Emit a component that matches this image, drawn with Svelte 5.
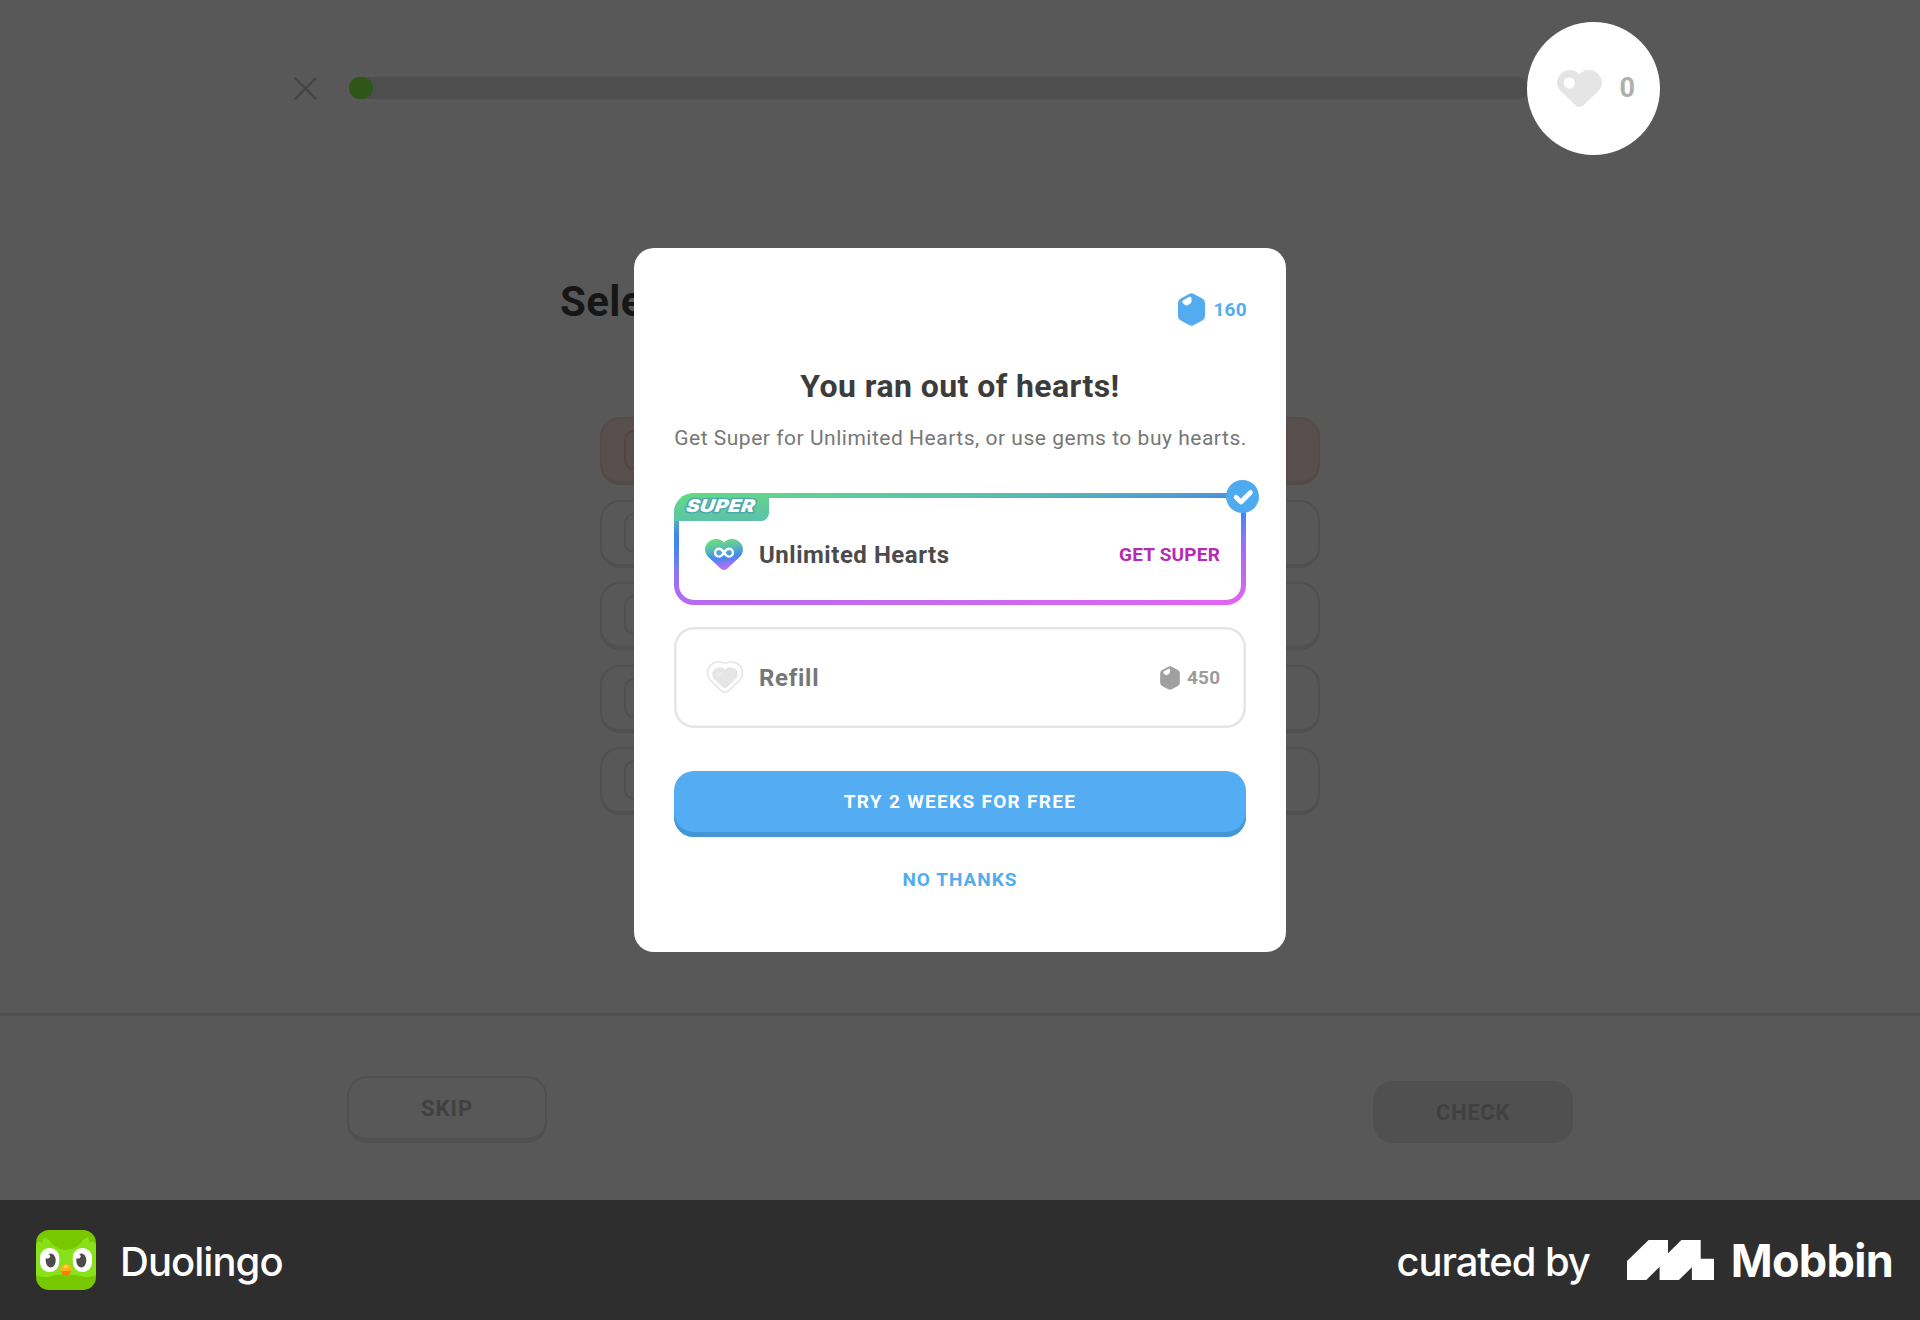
<script>
  const options = [
    { id: 1, wrong: true },
    { id: 2, wrong: false },
    { id: 3, wrong: false },
    { id: 4, wrong: false },
    { id: 5, wrong: false }
  ];
</script>

{#snippet gem(cls)}
  <svg class={cls} viewBox="0 0 27 33" aria-hidden="true">
    <path fill="currentColor" d="M11.1.9a5 5 0 0 1 4.8 0l8.4 4.6A5 5 0 0 1 27 9.9v13.2a5 5 0 0 1-2.7 4.4l-8.4 4.6a5 5 0 0 1-4.8 0l-8.4-4.6A5 5 0 0 1 0 23.1V9.9a5 5 0 0 1 2.7-4.4z" />
    <path fill="#fff" d="M10.8 4.1 5.4 7.3C3.8 8.3 3.9 9.5 5 10.3l2.1 1.6c1 .8 2 .7 3 .1l2.2-1.5c.9-.6 1.2-1.3 1.2-2.4V5.3c0-1.500-1.300-2-2.700-1.200z" />
  </svg>
{/snippet}

<div class="page">
  <main class="lesson">
    <header class="top">
      <svg class="close" viewBox="0 0 24 24" aria-hidden="true">
        <path d="M1.500 1.500l21 21M22.500 1.500l-21 21" />
      </svg>
      <div class="track"><div class="fill"></div></div>
      <div class="spotlight">
        <svg class="heart" viewBox="0 0 45 37" aria-hidden="true">
          <path fill="#e5e5e5" d="M22.500 4.200C17.800-1.300 9.500-1.300 4.200 3.500-1.200 8.600-1.300 15.800 3.300 20.800l15.200 14.500c2.600 2.300 5.400 2.300 8 0l15.200-14.500C46.300 15.800 46.200 8.600 40.800 3.500 35.500-1.300 27.200-1.300 22.500 4.200z" />
          <circle cx="12.300" cy="13" r="5.500" fill="#fff" />
        </svg>
        <span class="lives">0</span>
      </div>
    </header>

    <section class="challenge">
      <h1>Select</h1>
      <ul>
        {#each options as option (option.id)}
          <li class:wrong={option.wrong}><span class="key"></span></li>
        {/each}
      </ul>
    </section>

    <footer class="actions">
      <button class="skip">SKIP</button>
      <button class="check">CHECK</button>
    </footer>

    <div class="modal">
      <div class="balance">
        {@render gem('gem')}
        <span class="amount">160</span>
      </div>
      <h2>You ran out of hearts!</h2>
      <p class="sub">Get Super for Unlimited Hearts, or use gems to buy hearts.</p>

      <div class="card super">
        <div class="tag"><span>SUPER</span></div>
        <svg class="tick" viewBox="0 0 33 33" aria-hidden="true">
          <circle cx="16.500" cy="16.500" r="16.500" fill="#4eabf0" />
          <path d="M10 17.300l5 4.700L24.500 12.500" fill="none" stroke="#fff" stroke-width="4.600" stroke-linecap="round" stroke-linejoin="round" />
        </svg>
        <div class="inner">
          <svg class="card-icon" viewBox="0 0 38 31" aria-hidden="true">
            <defs>
              <linearGradient id="super-heart" x1=".3" y1="0" x2=".5" y2="1">
                <stop offset="0" stop-color="#6be07a" />
                <stop offset=".3" stop-color="#5cbfae" />
                <stop offset=".62" stop-color="#4488f0" />
                <stop offset=".84" stop-color="#9a74f4" />
                <stop offset="1" stop-color="#d266f4" />
              </linearGradient>
            </defs>
            <path fill="url(#super-heart)" d="M19 3.500C15-1.100 8-1.100 3.500 3-1 7.200-1 13.200 2.800 17.400l12.800 12.200c2.200 1.900 4.600 1.900 6.800 0L35.200 17.400C39 13.200 39 7.200 34.500 3 30-1.100 23-1.100 19 3.500z" />
            <path d="M19 13.700c-1.700-2.600-3.200-3.900-5-3.900a3.900 3.900 0 0 0 0 7.800c1.800 0 3.300-1.300 5-3.900 1.700-2.600 3.200-3.900 5-3.900a3.900 3.900 0 0 1 0 7.800c-1.800 0-3.300-1.300-5-3.900z" fill="none" stroke="#fff" stroke-width="2.400" stroke-linejoin="round" />
          </svg>
          <span class="name">Unlimited Hearts</span>
          <span class="get">GET SUPER</span>
        </div>
      </div>

      <div class="card refill">
        <div class="inner">
          <svg class="card-icon" viewBox="0 0 38 33" aria-hidden="true">
            <path fill="#fff" stroke="#e5e5e5" stroke-width="1.500" d="M20 2.200C17.500 1.200 15.500.9 13.200.9 10.300.9 8 1.900 5.900 3.900 1.500 8.300 1.600 15.300 5.600 19.500l10.200 9.900c2.600 2.400 5.800 2.400 8.400 0l10.200-9.900c4-4.200 4.100-11.200-.3-15.600-2.100-2-4.400-3-7.300-3-2.300 0-4.300.3-6.800 1.300z" />
            <path fill="#e5e5e5" d="M20 8.600c-2.700-3.200-7.300-3.200-10.300-.5-3.100 2.900-3.100 7-.5 9.800l8.700 8.400c1.400 1.200 2.800 1.200 4.200 0l8.700-8.400c2.600-2.800 2.600-6.900-.5-9.800-3-2.700-7.600-2.700-10.300.5z" />
            <circle cx="13.500" cy="13" r="2.800" fill="#ebebeb" />
          </svg>
          <span class="name">Refill</span>
          {@render gem('gem-small')}
          <span class="cost">450</span>
        </div>
      </div>

      <button class="try">TRY 2 WEEKS FOR FREE</button>
      <button class="no">NO THANKS</button>
    </div>
  </main>

  <div class="credits">
    <svg class="owl" viewBox="0 0 60 60" aria-hidden="true">
      <defs><clipPath id="owl-tile"><rect width="60" height="60" rx="13" /></clipPath></defs>
      <g clip-path="url(#owl-tile)">
        <rect width="60" height="60" fill="#78c800" />
        <path fill="#89e219" d="M0 15l3-4 3 2 2-6 5 3c4 6 10 10 17 10s13-4 17-10l5-3 2 6 3-2 3 4v30c-6 3-13 2.500-19 0H19c-6 2.500-13 3-19 0z" />
        <rect x="4" y="18" width="19.200" height="24" rx="9.300" fill="#fff" />
        <rect x="36.800" y="18" width="19.200" height="24" rx="9.300" fill="#fff" />
        <ellipse cx="14.700" cy="30.500" rx="5" ry="7" fill="#4b4b4b" />
        <ellipse cx="45.300" cy="30.500" rx="5" ry="7" fill="#4b4b4b" />
        <circle cx="11.600" cy="26.300" r="2.400" fill="#fff" />
        <circle cx="42.200" cy="26.300" r="2.400" fill="#fff" />
        <path fill="#f38400" d="M24.500 39h11l-1.300 5c-.6 2.300-7.800 2.300-8.400 0z" />
        <path fill="#ffb31a" d="M23.600 39c1.800-3.500 4-5 6.400-5s4.600 1.500 6.400 5c-1 2-3 2-6.400 2s-5.400 0-6.400-2z" />
        <ellipse cx="30" cy="36.500" rx="2.400" ry="1.500" fill="#ffd84d" />
      </g>
    </svg>
    <span class="app-name">Duolingo</span>
    <span class="curated">curated by</span>
    <svg class="mobbin" viewBox="0 0 87 40" aria-hidden="true">
      <path fill="#fff" d="M0 21 21.700 0H41v13.300L54.400 0h19.300v18.700H87V40H64.900V27.300L51.900 40H32.600V26.700L19.300 40H0z" />
    </svg>
    <span class="mobbin-name">Mobbin</span>
  </div>
</div>

<style>
  :global(body) { margin: 0; background: #2e2e2e; }
  .page { width: 1920px; height: 1320px; overflow: hidden; font-family: Roboto, "Liberation Sans", sans-serif; font-weight: 700; }
  h1, h2, p, ul { margin: 0; padding: 0; }
  button { box-sizing: border-box; border: 0; font: inherit; padding: 0; background: none; }
  svg { display: block; flex: none; }
  span { white-space: nowrap; }

  .lesson { position: relative; height: 1200px; display: flex; flex-direction: column; background: #585858; }
  .top { display: flex; align-items: center; height: 176px; box-sizing: border-box; padding-left: 294px; }
  .close { width: 23px; height: 23px; fill: none; stroke: #454545; stroke-width: 2.500; stroke-linecap: round; }
  .track { width: 1180px; height: 22px; margin-left: 32px; border-radius: 11px; background: #4e4e4e; }
  .fill { width: 24px; height: 22px; border-radius: 11px; background: #2f5616; }
  .spotlight { display: flex; align-items: center; box-sizing: border-box; width: 133px; height: 133px; margin-left: -2px; padding-left: 30px; border-radius: 50%; background: #fff; }
  .heart { width: 45px; height: 37px; }
  .lives { margin-left: 17.500px; font-size: 27px; color: #afafaf; }

  .challenge { flex: 1; width: 800px; margin: 0 auto; padding-top: 101px; }
  .challenge h1 { height: 50px; line-height: 50px; font-size: 42px; letter-spacing: .4px; color: #161616; white-space: nowrap; }
  .challenge ul { display: flex; flex-direction: column; gap: 14.500px; margin-top: 90px; padding: 0 40px; list-style: none; }
  .challenge li { box-sizing: border-box; height: 68px; padding: 11px 22px; border: 2px solid #505050; border-bottom-width: 4px; border-radius: 20px; }
  .key { display: block; box-sizing: border-box; width: 40px; height: 40px; border: 2px solid #505050; border-radius: 10px; }
  .challenge li.wrong { background: #574e4d; border-color: #534b4a; }
  .wrong .key { border-color: #564341; }

  .actions { display: flex; justify-content: space-between; align-items: flex-end; box-sizing: border-box; height: 187px; padding: 0 347px 57px; border-top: 3px solid #515151; font-size: 22px; }
  .actions button { width: 200px; border-radius: 20px; color: #404040; }
  .actions .skip { height: 67px; border: 2px solid #505050; border-bottom-width: 5px; letter-spacing: 1px; }
  .actions .check { height: 62px; background: #505050; letter-spacing: .7px; }

  .modal { position: absolute; left: 634px; top: 248px; display: flex; flex-direction: column; box-sizing: border-box; width: 652px; height: 704px; padding: 45px 40px 0; border-radius: 20px; background: #fff; }
  .balance { display: flex; align-items: center; justify-content: flex-end; gap: 8.500px; height: 33px; color: #54acf0; font-size: 19px; }
  .amount { margin-right: -1px; letter-spacing: .3px; }
  .gem { width: 27px; height: 33px; }
  .modal h2 { margin-top: 40px; font-size: 32px; line-height: 40px; letter-spacing: .43px; text-align: center; color: #3c3c3c; }
  .sub { margin: 18px -10px 0; padding-left: 1px; font-size: 21px; font-weight: 400; line-height: 28px; letter-spacing: .52px; text-align: center; color: #777; white-space: nowrap; }
  .card { position: relative; display: flex; box-sizing: border-box; border-radius: 20px; }
  .inner { flex: 1; display: flex; align-items: center; }
  .super {
    height: 112px; margin-top: 41px; border: 5px solid transparent;
    background:
      linear-gradient(#fff, #fff) padding-box,
      linear-gradient(176px, #fff, #fff) padding-box,
      linear-gradient(176.500deg, #62e080 0, #5cbfae 22px, #4688e8 40px, #4285f4 54px, #7d7bf8 76px, #ac6bf2 97px, #b66cf0 112px, #e564f0 146px) border-box;
    background:
      linear-gradient(#fff, #fff) padding-box,
      linear-gradient(176.500deg, #62e080 0, #5cbfae 22px, #4688e8 40px, #4285f4 54px, #7d7bf8 76px, #ac6bf2 97px, #b66cf0 112px, #e564f0 146px) border-box;
  }
  .super .inner { padding: 11px 21px 0 26px; }
  .tag { position: absolute; left: -5px; top: -5px; display: flex; align-items: center; justify-content: center; width: 95px; height: 28px; border-radius: 20px 0 8px 0; background: linear-gradient(176.500deg, #62dc80, #5cbfae); }
  .tag span { display: block; margin: -3px 0 0 -1px; color: #fff; font: italic 900 17.500px/20px Inter, sans-serif; letter-spacing: .3px; -webkit-text-stroke: 3px #50a9b0; paint-order: stroke fill; transform: scaleX(1.150) skewX(-8deg); }
  .tick { position: absolute; right: -17.500px; top: -18px; width: 33px; height: 33px; }
  .card-icon { width: 38px; }
  .name { flex: 1; margin-left: 16px; font-size: 24px; letter-spacing: .52px; color: #4b4b4b; }
  .get { font-size: 19px; letter-spacing: .2px; color: #b52bb2; }
  .refill { height: 101px; margin-top: 22px; box-shadow: inset 0 0 0 2.500px #e5e5e5; }
  .refill .inner { padding: 0 26px 0 31px; }
  .refill .name { letter-spacing: .7px; color: #777; }
  .gem-small { width: 20px; height: 24px; color: #a0a0a0; }
  .cost { margin: 0 -.5px 0 7px; font-size: 19px; letter-spacing: .3px; color: #9c9c9c; }
  .try { height: 66px; margin-top: 43px; padding-bottom: 6px; border-radius: 20px; background: #54acf2; box-shadow: inset 0 -5px #4596d4; color: #fff; font-size: 19px; letter-spacing: 1.300px; }
  .no { margin-top: 31px; font-size: 19px; line-height: 24px; letter-spacing: 1px; color: #54acf0; }

  .credits { display: flex; align-items: center; box-sizing: border-box; height: 120px; padding: 0 27px 0 36px; background: #2e2e2e; color: #fff; font-family: Inter, sans-serif; font-size: 40px; font-weight: 500; }
  .owl { width: 60px; height: 60px; }
  .app-name { margin-left: 24px; padding-top: 3px; letter-spacing: -.95px; }
  .curated { margin-left: auto; padding-top: 3px; letter-spacing: -1.100px; }
  .mobbin { width: 87px; height: 40px; margin-left: 37px; }
  .mobbin-name { margin-left: 17px; font-size: 45px; font-weight: 700; letter-spacing: -.7px; }
</style>
